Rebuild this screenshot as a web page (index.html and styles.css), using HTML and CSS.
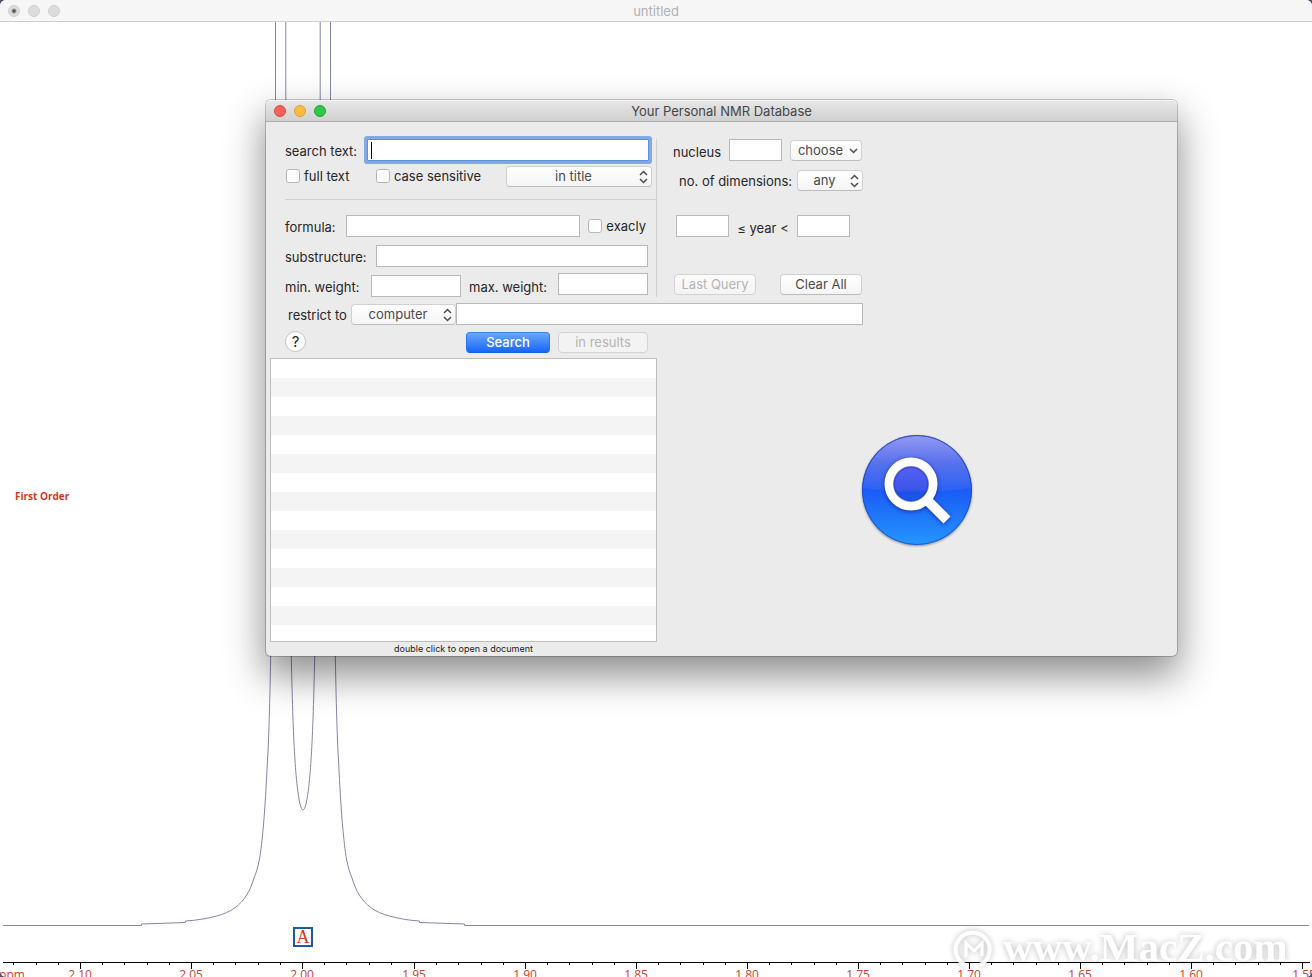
FILE: index.html
```html
<!DOCTYPE html>
<html lang="en">
<head>
<meta charset="utf-8">
<title>Your Personal NMR Database</title>
<link rel="stylesheet" href="styles.css">
</head>
<body>
<main class="document">
  <header class="document-bar">
    <div class="dots"><i class="dot edited"></i><i class="dot"></i><i class="dot"></i></div>
    <h1 class="document-title">untitled</h1>
  </header>
  <svg class="spectrum" viewBox="0 22 1312 955" preserveAspectRatio="xMinYMax slice" role="img" aria-label="NMR spectrum">
    <defs>
      <g id="ticks"><path d="M.5 0v7M22.5 0v3M44.5 0v3M67.5 0v3M89.5 0v3"/></g>
    </defs>
    <g class="trace">
      <path d="M275.500 20V100L270.700 656C269.600 715 268.500 745 267.500 760C266.300 785 265 808 263.300 827C262.200 839 261 851 259.300 860C257.800 867 256.300 873 254 878C252 884.500 249.500 890.500 246.700 895C243.500 900 240 904 235 907.700C229.500 911.700 224 914 216.700 916C207 918.500 196 920.500 185.500 921V922.500L141.500 924V925.500H3"/>
      <path d="M330.500 20V100L335.300 656C336.400 715 337.500 745 338.500 760C339.700 785 341 808 342.700 827C343.800 839 345 851 346.700 860C348.200 867 349.700 873 352 878C354 884.500 356.500 890.500 359.300 895C362.500 900 366 904 371 907.700C376.500 911.700 382 914 389.300 916C399 918.500 409 920.500 419.500 921V922.500L464.500 924V925.500H1309"/>
      <path d="M285.800 20V100L291.300 656C292.300 705 293.500 738 295 760C296 778 299 810 303 810C307 810 310 778 311 760C312.500 738 313.700 705 314.700 656L320.200 100V20"/>
    </g>
    <text class="order" x="15" y="500">First Order</text>
    <rect class="peak-box" x="294" y="928" width="18" height="18"/>
    <text class="peak-name" x="303" y="943">A</text>
    <path class="axis" d="M3 962.500H1310"/>
    <g class="axis">
      <use href="#ticks" x="-31" y="962"/><use href="#ticks" x="80" y="962"/><use href="#ticks" x="191" y="962"/>
      <use href="#ticks" x="302" y="962"/><use href="#ticks" x="414" y="962"/><use href="#ticks" x="525" y="962"/>
      <use href="#ticks" x="636" y="962"/><use href="#ticks" x="747" y="962"/><use href="#ticks" x="858" y="962"/>
      <use href="#ticks" x="969" y="962"/><use href="#ticks" x="1080" y="962"/><use href="#ticks" x="1191" y="962"/>
      <use href="#ticks" x="1302" y="962"/>
    </g>
    <g class="scale">
      <text x="12" y="979">ppm</text><text x="80" y="979">2.10</text><text x="191" y="979">2.05</text><text x="302" y="979">2.00</text>
      <text x="414" y="979">1.95</text><text x="525" y="979">1.90</text><text x="636" y="979">1.85</text><text x="747" y="979">1.80</text>
      <text x="858" y="979">1.75</text><text x="969" y="979">1.70</text><text x="1080" y="979">1.65</text><text x="1191" y="979">1.60</text><text x="1304" y="979">1.55</text>
    </g>
    <g class="watermark">
      <path class="mark" d="M968 966A17 17 0 1 1 980 965"/>
      <path class="mark-letter" d="M966 957V943L974 951L982 943V956"/>
      <text x="1003" y="961">www.MacZ.com</text>
    </g>
  </svg>
</main>

<section class="dialog" aria-labelledby="dialog-title">
  <header class="dialog-bar">
    <div class="dots"><i class="dot red"></i><i class="dot yellow"></i><i class="dot green"></i></div>
    <h2 class="dialog-title" id="dialog-title">Your Personal NMR Database</h2>
  </header>
  <form class="query" onsubmit="return false">
    <div class="terms">
      <div class="row">
        <label for="text">search text:</label>
        <span class="focus-field"><input class="field" id="text" type="text"><i class="caret"></i></span>
      </div>
      <div class="row options">
        <label class="check full"><input type="checkbox">full text</label>
        <label class="check"><input type="checkbox">case sensitive</label>
        <span class="picker scope"><select aria-label="Search scope"><option>in title</option></select>
          <svg class="arrows" viewBox="0 0 9 14"><path d="M1 5l3.500-3.500L8 5M1 9l3.500 3.500L8 9"/></svg></span>
      </div>
      <hr class="rule">
      <div class="row formula">
        <label for="formula">formula:</label>
        <input class="field grow" id="formula" type="text">
        <label class="check"><input type="checkbox">exacly</label>
      </div>
      <div class="row substructure">
        <label for="substructure">substructure:</label>
        <input class="field grow" id="substructure" type="text">
      </div>
      <div class="row weights">
        <label class="min-label" for="min">min. weight:</label>
        <input class="field weight" id="min" type="text">
        <label class="max-label" for="max">max. weight:</label>
        <input class="field weight max" id="max" type="text">
      </div>
    </div>
    <div class="filters">
      <div class="row nucleus">
        <label for="nucleus">nucleus</label>
        <input class="field small" id="nucleus" type="text">
        <span class="picker choose"><select aria-label="Choose nucleus"><option>choose</option></select>
          <svg class="chevron" viewBox="0 0 9 6"><path d="M1 1l3.500 3.500L8 1"/></svg></span>
      </div>
      <div class="row dimensions">
        <label for="dims">no. of dimensions:</label>
        <span class="picker any"><select id="dims"><option>any</option></select>
          <svg class="arrows" viewBox="0 0 9 14"><path d="M1 5l3.500-3.500L8 5M1 9l3.500 3.500L8 9"/></svg></span>
      </div>
      <div class="row years">
        <input class="field small" type="text" aria-label="From year">
        <span class="year-text">≤ year &lt;</span>
        <input class="field small" type="text" aria-label="Before year">
      </div>
      <div class="row actions">
        <button class="button" type="button" disabled>Last Query</button>
        <button class="button" type="button">Clear All</button>
      </div>
    </div>
    <div class="row restrict">
      <label for="place">restrict to</label>
      <span class="picker place"><select id="place"><option>computer</option></select>
        <svg class="arrows" viewBox="0 0 9 14"><path d="M1 5l3.500-3.500L8 5M1 9l3.500 3.500L8 9"/></svg></span>
      <input class="field grow" type="text" aria-label="Location">
    </div>
    <div class="found">
      <div class="row run">
        <button class="help" type="button">?</button>
        <button class="button primary" type="submit">Search</button>
        <button class="button within" type="button" disabled>in results</button>
      </div>
      <div class="list"></div>
      <p class="hint">double click to open a document</p>
    </div>
    <div class="preview">
      <svg class="badge" viewBox="0 0 116 116" role="img" aria-label="Search">
        <defs>
          <linearGradient id="ball" x1="0" y1="0" x2="0" y2="1"><stop offset="0" stop-color="#5560dc"/><stop offset=".5" stop-color="#1b5bf6"/><stop offset="1" stop-color="#2496ff"/></linearGradient>
          <linearGradient id="gloss" x1="0" y1="0" x2="0" y2="1"><stop offset="0" stop-color="#a9aef8"/><stop offset=".5" stop-color="#6176ee"/><stop offset="1" stop-color="#2c62f4"/></linearGradient>
          <linearGradient id="lens" x1="0" y1="0" x2="0" y2="1"><stop offset="0" stop-color="#5a64f2"/><stop offset=".62" stop-color="#3c56ea"/><stop offset=".7" stop-color="#1d4fe6"/><stop offset="1" stop-color="#1d60f4"/></linearGradient>
          <clipPath id="round"><circle cx="58" cy="57" r="54"/></clipPath>
        </defs>
        <circle class="ball" cx="58" cy="57" r="55"/>
        <path class="gloss" clip-path="url(#round)" d="M0 0H116V54Q58 64 0 54Z"/>
        <circle class="rim" cx="58" cy="57" r="54.500"/>
        <g class="glass">
          <circle class="lens" cx="52" cy="51" r="22"/>
          <path class="handle" d="M67 66L88 87"/>
        </g>
        <circle class="lens-edge" cx="52" cy="51" r="17"/>
      </svg>
    </div>
  </form>
</section>
</body>
</html>
```
FILE: styles.css
```css
* { box-sizing: border-box; }
body {
  margin: 0;
  min-height: 100vh;
  background: #57506c;
  color: #262626;
  font: 13px/16px Inter, "Liberation Sans", sans-serif;
  overflow: hidden;
}
h1, h2, p { margin: 0; font-weight: 400; }
.document {
  height: 100vh;
  display: flex;
  flex-direction: column;
  background: #fff;
  border-radius: 6px;
  overflow: hidden;
}
.document-bar, .dialog-bar {
  display: grid;
  grid-template-columns: 1fr auto 1fr;
  align-items: center;
  height: 22px;
  padding: 0 8px;
  flex: none;
}
.document-bar { background: #f6f6f6; border-bottom: 1px solid #cfcfcf; }
.document-title, .dialog-title { font-size: 13px; line-height: 20px; }
.document-title { color: #b1b1b1; }
.dots { display: flex; gap: 8px; }
.dot {
  width: 12px;
  height: 12px;
  border-radius: 50%;
  background: #dcdcdc;
  border: 1px solid #cecece;
}
.edited { background: radial-gradient(circle, #555 1px, #dcdcdc 3px); }
.red { background: #fc605b; border-color: #df4744; }
.yellow { background: #fdbc40; border-color: #de9f34; }
.green { background: #30c74a; border-color: #20a833; }

.spectrum { display: block; width: 100%; flex: 1; min-height: 0; }
.trace path { fill: none; stroke: #8585a5; stroke-width: 1; }
.order { fill: #d23a1c; font: bold 10px "Open Sans", sans-serif; }
.peak-box { fill: #fff; stroke: #1f5a9e; stroke-width: 2; }
.peak-name { fill: #d23a1c; font: 18px "Liberation Serif", serif; text-anchor: middle; }
.axis { stroke: #000; fill: none; shape-rendering: crispEdges; }
.scale { fill: #c9432c; font: 12px "Open Sans", sans-serif; text-anchor: middle; }
.watermark { filter: drop-shadow(0 0 3px rgba(0, 0, 0, .3)); fill: #fff; opacity: .9; }
.watermark text { font: bold 41px "Liberation Serif", serif; }
.mark { fill: none; stroke: #fff; stroke-width: 4; }
.mark-letter { fill: none; stroke: #fff; stroke-width: 3; }

.dialog {
  position: absolute;
  top: 100px;
  left: 266px;
  right: 135px;
  background: #ebebeb;
  border-radius: 5px;
  box-shadow: 0 0 0 1px rgba(0, 0, 0, .2), 0 18px 38px 2px rgba(0, 0, 0, .44);
}
.dialog-bar {
  background: linear-gradient(#e8e8e8, #d0d0d0);
  border-bottom: 1px solid #adadad;
  border-radius: 5px 5px 0 0;
  box-shadow: inset 0 1px #f5f5f5;
}
.dialog-title { color: #454545; }

.query {
  display: grid;
  grid-template-columns: 391px 1fr;
  padding-top: 17px;
}
.row { display: flex; align-items: center; height: 22px; }
.row label { padding-top: 2px; white-space: nowrap; }
.terms {
  margin-left: 19px;
  padding-right: 8px;
  border-right: 1px solid #d0d0d0;
  height: 158px;
}
.field {
  width: 90px;
  min-width: 0;
  height: 22px;
  padding: 0 4px;
  border: 1px solid #b9b9b9;
  background: #fff;
  font: inherit;
  outline: 0;
}
.grow { flex: 1; }
.small { width: 53px; }
.focus-field { position: relative; flex: 0 0 282px; margin-left: auto; margin-right: -1px; }
.focus-field .field {
  display: block;
  width: 100%;
  border-color: #5c8fdd;
  box-shadow: 0 0 0 3px #82a9e5;
  border-radius: 1px;
}
.caret { position: absolute; left: 4px; top: 3px; width: 1px; height: 17px; background: #000; }
.options { margin-top: 4px; padding-left: 1px; }
.row .check { display: flex; align-items: center; gap: 4px; padding: 0; }
.check input {
  appearance: none;
  width: 14px;
  height: 14px;
  margin: 0;
  border: 1px solid #b6b6b6;
  border-radius: 3px;
  background: #fff;
}
.full { width: 90px; }
.picker { position: relative; height: 21px; }
.picker select, .button {
  appearance: none;
  display: block;
  width: 100%;
  height: 21px;
  padding: 0;
  border: 1px solid #d0d0d0;
  border-bottom-color: #bcbcbc;
  border-radius: 4px;
  background: linear-gradient(#fff, #f5f5f5);
  color: #4a4a4a;
  font: inherit;
  line-height: 19px;
  text-align: center;
  text-align-last: center;
}
.picker select { padding-right: 11px; }
.scope { width: 146px; margin-left: auto; margin-right: -4px; }
.arrows, .chevron { position: absolute; pointer-events: none; fill: none; stroke: #4c4c4c; stroke-width: 1.5; }
.arrows { width: 9px; height: 14px; right: 4px; top: 4px; }
.chevron { width: 9px; height: 6px; right: 4px; top: 8px; }
.rule { height: 1px; margin: 12px -8px 15px 0; border: 0; background: #d0d0d0; }
.formula { gap: 8px; padding-right: 2px; }
.formula .field { margin-left: 2px; }
.substructure { margin-top: 8px; gap: 9px; }
.weights { margin-top: 6px; height: 24px; align-items: flex-end; }
.weights label { height: 20px; }
.min-label { width: 86px; }
.max-label { margin-left: 8px; }
.weights .max { align-self: flex-start; margin-left: auto; }

.filters { width: 206px; padding-left: 16px; }
.nucleus { justify-content: space-between; padding-right: 1px; }
.nucleus label { width: 48px; }
.filters .nucleus label { padding-top: 4px; }
.choose { width: 72px; }
.dimensions { margin-top: 8px; gap: 5px; justify-content: flex-end; }
.any { width: 66px; }
.years { margin-top: 24px; padding: 0 13px 0 3px; justify-content: space-between; }
.year-text { padding-top: 4px; }
.actions { margin-top: 36px; justify-content: space-between; padding: 0 1px; }
.actions .button { width: 82px; }
.button:disabled { color: #b4b4b4; background: #f3f3f3; border-color: #d3d3d3; }
.actions .button:disabled { background: linear-gradient(#fbfbfb, #f4f4f4); }

.restrict { grid-column: 1 / -1; width: 597px; margin-top: 6px; padding-left: 22px; }
.restrict label { width: 63px; }
.place { width: 105px; }

.found { padding-left: 4px; }
.run { margin-top: 6px; padding: 0 9px 0 15px; }
.help {
  align-self: flex-start;
  width: 21px;
  height: 21px;
  padding: 0;
  border: 1px solid #c3c3c3;
  border-radius: 50%;
  background: #fff;
  color: #262626;
  font: 15px/19px Inter, sans-serif;
  text-align: center;
}
.primary {
  width: 84px;
  margin-left: auto;
  border-color: #3f82f0 #2a74f5 #1561e6;
  background: linear-gradient(#6aa6fb, #1766fb);
  color: #fff;
  font-weight: 500;
}
.within { width: 90px; margin-left: 8px; }
.list {
  height: 284px;
  margin-top: 5px;
  border: 1px solid #bdbdbd;
  background: repeating-linear-gradient(#fff 0 19px, #f4f4f4 19px 38px);
}
.hint { height: 14px; font-size: 9px; line-height: 14px; text-align: center; color: #1c1c1c; }
.preview { display: flex; align-items: center; justify-content: center; }
.badge { width: 116px; height: 116px; }
.ball { fill: url(#ball); filter: drop-shadow(0 1px 1px rgba(0, 0, 0, .4)); }
.gloss { fill: url(#gloss); opacity: .8; }
.rim { fill: none; stroke: #2442b4; stroke-opacity: .7; }
.glass { stroke: #fff; filter: drop-shadow(0 1px 2px rgba(10, 20, 130, .7)); }
.lens { fill: url(#lens); stroke-width: 9; }
.lens-edge { fill: none; stroke: #2233a8; stroke-width: 2; opacity: .4; }
.handle { stroke-width: 10; }
```
